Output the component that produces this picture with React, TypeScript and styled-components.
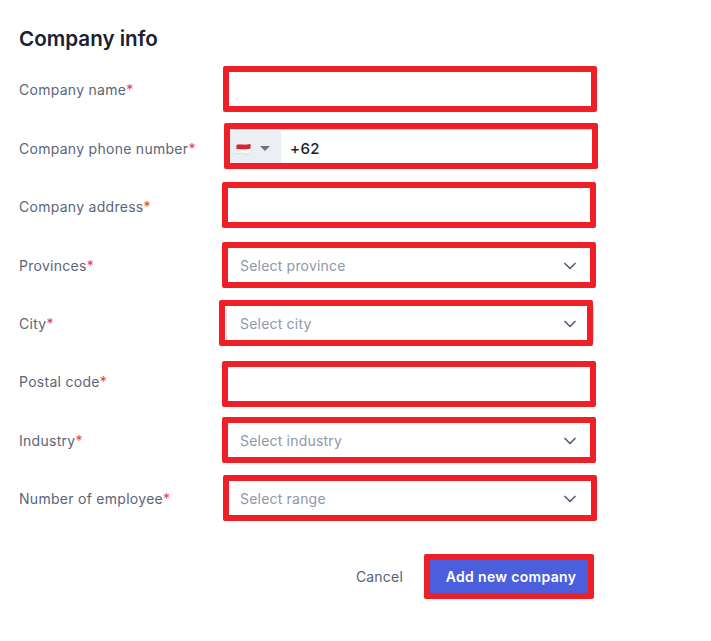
import React from "react";
import styled, { createGlobalStyle } from "styled-components";
import { ChevronDown } from "lucide-react";

const GlobalStyle = createGlobalStyle`
  html, body {
    margin: 0;
    background: #ffffff;
    font-family: "Inter", "Liberation Sans", sans-serif;
  }
`;

const Page = styled.div`
  width: 711px;
  height: 641px;
  box-sizing: border-box;
  padding: 26px 0 0 19px;
  overflow: hidden;
`;

const Title = styled.h2`
  margin: 0 0 18.4px;
  font-size: 20.6px;
  line-height: 26px;
  font-weight: 600;
  color: #1a2230;
`;

const Rows = styled.div`
  display: flex;
  flex-direction: column;
  gap: 18.4px;
`;

const Row = styled.div`
  display: grid;
  grid-template-columns: 207px 368px;
  align-items: center;
  height: 40px;
`;

const Label = styled.label`
  font-size: 14px;
  line-height: 20px;
  color: #5b6578;
  letter-spacing: 0.28px;
`;

const Required = styled.span`
  color: #e53e3e;
`;

const Field = styled.div`
  position: relative;
  display: flex;
  align-items: center;
  height: 40px;
  box-sizing: border-box;
  border: 1px solid #d9dde3;
  border-radius: 4px;
  background: #ffffff;
`;

// the red annotation rectangle lying over each control
const Frame = styled.div<{ $dx: number; $dy: number }>`
  position: absolute;
  left: ${(p) => p.$dx - 4}px;
  top: ${(p) => p.$dy - 4}px;
  width: 374px;
  height: 46px;
  box-sizing: border-box;
  border: 6px solid #ee1f27;
  border-radius: 2px;
  pointer-events: none;
`;

const Placeholder = styled.span`
  flex: 1;
  padding: 0 0 1px 13px;
  font-size: 14px;
  letter-spacing: 0.2px;
  color: #8d98ab;
`;

const Chevron = styled(ChevronDown)`
  width: 20px;
  height: 20px;
  margin-right: 13px;
  color: #545d70;
  stroke-width: 2;
`;

const CountryBox = styled.div`
  display: flex;
  align-items: center;
  align-self: stretch;
  width: 54px;
  box-sizing: border-box;
  padding-left: 9px;
  margin: 1px 0;
  background: #ebeef2;
  border-radius: 3px 0 0 3px;
`;

const Caret = styled.span`
  width: 0;
  height: 0;
  margin-left: 9px;
  border-left: 5.5px solid transparent;
  border-right: 5.5px solid transparent;
  border-top: 5.5px solid #6b7280;
`;

const PhoneValue = styled.span`
  padding-left: 9px;
  font-size: 15px;
  font-weight: 500;
  letter-spacing: 0.4px;
  color: #1a2230;
`;

const Footer = styled.div`
  display: flex;
  justify-content: flex-end;
  align-items: center;
  width: 572px;
  margin-top: 38px;
  gap: 24px;
`;

const CancelButton = styled.button`
  padding: 0;
  border: 0;
  background: none;
  font: inherit;
  font-size: 14px;
  letter-spacing: 0.2px;
  color: #566073;
`;

const SubmitButton = styled.button`
  position: relative;
  width: 164px;
  height: 39px;
  padding: 0 0 0 4px;
  border: 0;
  border-radius: 4px;
  background: #4b5fdc;
  color: #ffffff;
  font: inherit;
  font-size: 14px;
  font-weight: 600;
  letter-spacing: 0.33px;
`;

const SubmitFrame = styled.span`
  position: absolute;
  left: -3px;
  top: -3px;
  width: 170px;
  height: 45px;
  box-sizing: border-box;
  border: 6px solid #ee1f27;
  border-radius: 2px;
`;

function FlagIcon() {
  return (
    <svg width="15" height="12" viewBox="0 0 15 12" aria-hidden="true">
      <path d="M0.5 2 C4 0.8 9 2.6 14.5 1 V11 C9 12.4 4 10 0.5 11.2 Z" fill="#c9cdd3" />
      <path d="M0.5 6 C4 5 9 7 14.5 5.4 V10.2 C9 11.6 4 9.4 0.5 10.4 Z" fill="#f7f7f7" />
      <path d="M0.5 2 C4 0.8 9 2.6 14.5 1 V5.6 C9 7.2 4 5.2 0.5 6.2 Z" fill="#d8232f" />
    </svg>
  );
}

type FieldKind = "text" | "phone" | "select";

interface RowData {
  label: string;
  kind: FieldKind;
  placeholder?: string;
  dx: number;
  dy: number;
}

const rows: RowData[] = [
  { label: "Company name", kind: "text", dx: 0, dy: -1 },
  { label: "Company phone number", kind: "phone", dx: 1, dy: -3 },
  { label: "Company address", kind: "text", dx: -1, dy: -2 },
  { label: "Provinces", kind: "select", placeholder: "Select province", dx: -1, dy: -1 },
  { label: "City", kind: "select", placeholder: "Select city", dx: -4, dy: -1 },
  { label: "Postal code", kind: "text", dx: -1, dy: 2 },
  { label: "Industry", kind: "select", placeholder: "Select industry", dx: -1, dy: -1 },
  { label: "Number of employee", kind: "select", placeholder: "Select range", dx: 0, dy: -1 },
];

export default function App() {
  return (
    <Page>
      <GlobalStyle />
      <Title>Company info</Title>
      <Rows>
        {rows.map((row) => (
          <Row key={row.label}>
            <Label>
              {row.label}
              <Required>*</Required>
            </Label>
            <Field>
              {row.kind === "phone" && (
                <>
                  <CountryBox>
                    <FlagIcon />
                    <Caret />
                  </CountryBox>
                  <PhoneValue>+62</PhoneValue>
                </>
              )}
              {row.kind === "select" && (
                <>
                  <Placeholder>{row.placeholder}</Placeholder>
                  <Chevron />
                </>
              )}
              <Frame $dx={row.dx} $dy={row.dy} />
            </Field>
          </Row>
        ))}
      </Rows>
      <Footer>
        <CancelButton>Cancel</CancelButton>
        <SubmitButton>
          Add new company
          <SubmitFrame />
        </SubmitButton>
      </Footer>
    </Page>
  );
}
